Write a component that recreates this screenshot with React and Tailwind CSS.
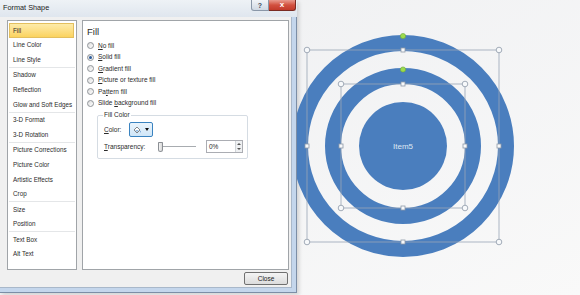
import React from 'react';

const groups = [
  ['Fill', 'Line Color', 'Line Style'],
  ['Shadow', 'Reflection', 'Glow and Soft Edges'],
  ['3-D Format', '3-D Rotation'],
  ['Picture Corrections', 'Picture Color', 'Artistic Effects', 'Crop'],
  ['Size', 'Position'],
  ['Text Box', 'Alt Text'],
];

function Radio({ checked }) {
  return (
    <span className="w-[7px] h-[7px] rounded-full border border-[#8f9499] bg-linear-to-br from-[#dcdcdc] to-[#ffffff] flex items-center justify-center shrink-0">
      {checked && <span className="w-[3px] h-[3px] rounded-full bg-[#2a5a9a]" />}
    </span>
  );
}

function Opt({ pre, u, post, checked }) {
  return (
    <div className="h-[11.5px] flex items-center gap-[4px]">
      <Radio checked={checked} />
      <span>
        {pre}
        <span className="underline">{u}</span>
        {post}
      </span>
    </div>
  );
}

function Bucket() {
  return (
    <svg width="9" height="8" viewBox="0 0 9 8">
      <path d="M1 4 L4 1 L7 4 L4 7 Z" fill="#ffffff" stroke="#555" strokeWidth="0.7" />
      <path d="M2.2 4.2 L5.8 4.2 L4 6 Z" fill="#6fa6d8" />
      <path d="M7.3 4.5 Q8.3 6 7.6 6.8 Q6.8 6 7.3 4.5 Z" fill="#3a77c0" />
    </svg>
  );
}

function Canvas() {
  const cx = 106;
  const cy = 146;
  const blue = '#4a7ebe';
  const line = '#9aa6b6';
  const box = (h) => {
    const l = cx - h, r = cx + h, t = cy - h, b = cy + h;
    const corners = [[l, t], [r, t], [l, b], [r, b]];
    const mids = [[cx, t], [cx, b], [l, cy], [r, cy]];
    return (
      <g>
        <rect x={l} y={t} width={2 * h} height={2 * h} fill="none" stroke={line} strokeWidth="0.8" />
        {corners.map(([x, y], i) => (
          <circle key={'c' + i} cx={x} cy={y} r="2.8" fill="#f7f9fb" stroke="#8e99a8" strokeWidth="0.8" />
        ))}
        {mids.map(([x, y], i) => (
          <rect key={'m' + i} x={x - 2} y={y - 2} width="4" height="4" fill="#f7f9fb" stroke="#8e99a8" strokeWidth="0.8" />
        ))}
      </g>
    );
  };
  return (
    <svg width="283" height="295" viewBox="0 0 283 295" className="block">
      <circle cx={cx} cy={cy} r="103" fill="none" stroke={blue} strokeWidth="16" />
      <circle cx={cx} cy={cy} r="70" fill="none" stroke={blue} strokeWidth="16" />
      <circle cx={cx} cy={cy} r="44" fill={blue} />
      {box(96)}
      {box(62)}
      <circle cx={cx} cy={36} r="2.6" fill="#9ddb4c" stroke="#6aa83a" strokeWidth="0.6" />
      <circle cx={cx} cy={69.5} r="2.6" fill="#9ddb4c" stroke="#6aa83a" strokeWidth="0.6" />
      <text x={cx} y={cy + 3} textAnchor="middle" fontSize="8" fill="#dde7f3" fontFamily="Liberation Sans, Arial, sans-serif">
        Item5
      </text>
    </svg>
  );
}

export default function App() {
  return (
    <div className="w-[580px] h-[295px] overflow-hidden flex bg-linear-to-br from-[#eeeff1] to-[#f9f9f9] font-['Liberation_Sans',Arial,sans-serif] text-[#2b2b2b]">
      {/* Dialog */}
      <div className="w-[297px] h-[293px] shrink-0 flex flex-col shadow-[2px_2px_4px_rgba(0,0,0,0.15)]">
        {/* Title bar */}
        <div className="h-[17px] shrink-0 flex items-start bg-linear-to-b from-[#eef2f6] to-[#dfe6ee]">
          <div className="pl-[3px] pt-[4px] text-[7.3px] leading-[8px] text-[#1a1a1a] flex-1">Format Shape</div>
          <div className="flex mr-[1px]">
            <div className="w-[18px] h-[11px] rounded-bl-[3px] border border-t-0 border-[#8a97a8] bg-linear-to-b from-[#f1f4f8] to-[#cfd8e3] flex items-center justify-center text-[7px] leading-none font-bold text-[#3f4b5b]">?</div>
            <div className="w-[27px] h-[11px] rounded-br-[3px] border border-t-0 border-l-0 border-[#7a2b22] bg-linear-to-b from-[#e89a8e] via-[#d2503f] to-[#c23a2a] flex items-center justify-center text-[8px] leading-none font-bold text-white">x</div>
          </div>
        </div>
        {/* Frame + body */}
        <div className="flex-1 flex flex-col bg-[#c4d6ec] pr-[4px] pb-[4px] border-r border-b border-[#7c8ea6]">
          <div className="flex-1 bg-[#f0f0f0] border-r border-b border-[#a9b8ca] pl-[7px] pr-[2px] pt-[3px] flex flex-col">
            <div className="flex gap-[5px] h-[250px]">
              {/* Left list */}
              <div className="w-[70px] bg-white border border-[#a0a4a8] pt-[2px] text-[6.3px]">
                {groups.map((g, gi) => (
                  <div key={gi} className={gi < groups.length - 1 ? 'border-b border-[#e4e6e8] mx-[1px]' : 'mx-[1px]'}>
                    {g.map((item) =>
                      item === 'Fill' ? (
                        <div key={item} className="h-[14.6px] mr-[1px] flex items-center pl-[3px] border border-[#e3bf5e] bg-linear-to-b from-[#fdeba9] to-[#fbd35e]">
                          {item}
                        </div>
                      ) : (
                        <div key={item} className="h-[14.6px] flex items-center pl-[4px]">
                          {item}
                        </div>
                      )
                    )}
                  </div>
                ))}
              </div>
              {/* Right panel */}
              <div className="flex-1 bg-white border border-[#a0a4a8] pl-[4px] text-[6.5px]">
                <div className="mt-[5px] h-[12px] text-[9.5px] leading-[12px] text-[#2b2b2b]">Fill</div>
                <div className="mt-[2px]">
                  <Opt u="N" post="o fill" />
                  <Opt u="S" post="olid fill" checked />
                  <Opt u="G" post="radient fill" />
                  <Opt u="P" post="icture or texture fill" />
                  <Opt pre="Pa" u="t" post="tern fill" />
                  <Opt pre="Slide " u="b" post="ackground fill" />
                </div>
                <fieldset className="mt-[2px] ml-[10px] w-[151px] border border-[#d5dce3] rounded-[2px] pl-[6px] pb-[5px]">
                  <legend className="px-[1px] -ml-[1px] h-[8px] leading-[8px]">Fill Color</legend>
                  <div className="mt-[3px] h-[15px] flex items-center">
                    <span className="w-[25px]">
                      <span className="underline">C</span>olor:
                    </span>
                    <div className="w-[24px] h-[15px] border border-[#3a83c0] rounded-[2px] bg-linear-to-b from-[#eaf4fc] to-[#cfe6f8] flex items-center pl-[3px] gap-[1px]">
                      <Bucket />
                      <span className="w-0 h-0 ml-[2px] border-l-[2.5px] border-r-[2.5px] border-t-[3px] border-l-transparent border-r-transparent border-t-[#111]" />
                    </div>
                  </div>
                  <div className="mt-[3px] h-[13px] flex items-center">
                    <span className="w-[54px]">
                      <span className="underline">T</span>ransparency:
                    </span>
                    <div className="w-[38px] flex items-center">
                      <div className="w-[5px] h-[10px] rounded-b-[3px] rounded-t-[1px] border border-[#8b8f94] bg-linear-to-r from-[#f4f4f4] to-[#d9d9d9] shrink-0" />
                      <div className="flex-1 h-[1px] bg-[#a8acb0]" />
                    </div>
                    <div className="ml-[10px] w-[37px] h-[13px] border border-[#abadb3] bg-white flex items-center">
                      <span className="flex-1 pl-[2px]">0%</span>
                      <div className="w-[7px] h-full border-l border-[#d0d4d8] bg-[#eef0f2] flex flex-col items-center justify-around py-[1px]">
                        <span className="w-0 h-0 border-l-[2px] border-r-[2px] border-b-[2px] border-l-transparent border-r-transparent border-b-[#555]" />
                        <span className="w-0 h-0 border-l-[2px] border-r-[2px] border-t-[2px] border-l-transparent border-r-transparent border-t-[#555]" />
                      </div>
                    </div>
                  </div>
                </fieldset>
              </div>
            </div>
            <div className="mt-[2px] flex justify-end pr-[1px]">
              <div className="w-[44px] h-[13px] rounded-[2px] border border-[#707070] bg-linear-to-b from-[#f4f4f4] to-[#dcdcdc] flex items-center justify-center text-[6.5px] text-[#1a1a1a]">
                Close
              </div>
            </div>
          </div>
        </div>
      </div>
      {/* Canvas */}
      <div className="flex-1 h-full">
        <Canvas />
      </div>
    </div>
  );
}
